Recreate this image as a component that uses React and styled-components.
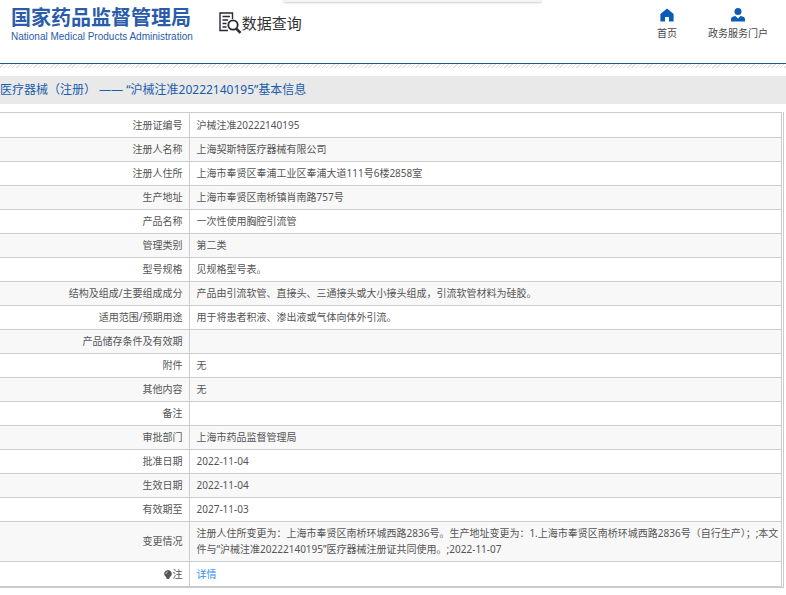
import styled, { createGlobalStyle } from 'styled-components';

const rows = [
    { label: '注册证编号', value: '沪械注准20222140195' },
    { label: '注册人名称', value: '上海契斯特医疗器械有限公司' },
    { label: '注册人住所', value: '上海市奉贤区奉浦工业区奉浦大道111号6楼2858室' },
    { label: '生产地址', value: '上海市奉贤区南桥镇肖南路757号' },
    { label: '产品名称', value: '一次性使用胸腔引流管' },
    { label: '管理类别', value: '第二类' },
    { label: '型号规格', value: '见规格型号表。' },
    { label: '结构及组成/主要组成成分', value: '产品由引流软管、直接头、三通接头或大小接头组成，引流软管材料为硅胶。' },
    { label: '适用范围/预期用途', value: '用于将患者积液、渗出液或气体向体外引流。' },
    { label: '产品储存条件及有效期', value: '' },
    { label: '附件', value: '无' },
    { label: '其他内容', value: '无' },
    { label: '备注', value: '' },
    { label: '审批部门', value: '上海市药品监督管理局' },
    { label: '批准日期', value: '2022-11-04' },
    { label: '生效日期', value: '2022-11-04' },
    { label: '有效期至', value: '2027-11-03' },
    { label: '变更情况', value: '注册人住所变更为：上海市奉贤区南桥环城西路2836号。生产地址变更为：1.上海市奉贤区南桥环城西路2836号（自行生产）；;本文件与“沪械注准20222140195”医疗器械注册证共同使用。;2022-11-07' },
];

function SearchDocIcon(){
    return(
        <svg width="23" height="22" viewBox="0 0 23 22" fill="none" stroke="#2b2733" aria-hidden="true">
            <path d="M13.5 7V1H1v17.5h8" strokeWidth="1.4" />
            <path d="M3.5 4.5h7.5M3.5 8h5.5M3.5 11.5h4M3.5 15h4" strokeWidth="1.3" />
            <circle cx="14" cy="13" r="4.7" strokeWidth="1.8" />
            <path d="M17.5 16.8l4 4" strokeWidth="2.6" />
        </svg>
    );
}

function HomeIcon(){
    return(
        <svg width="14" height="14" viewBox="0 0 14 14" fill="#0a5cb8" aria-hidden="true">
            <path d="M7 0.5L13.6 6v7.5H9V9H5v4.5H0.4V6z" />
        </svg>
    );
}

function PersonIcon(){
    return(
        <svg width="14" height="14" viewBox="0 0 14 14" fill="#0a5cb8" aria-hidden="true">
            <circle cx="7" cy="3.6" r="3.5" />
            <path d="M0 13.6V11q0-2.4 4.4-3L7 10.6 9.6 8Q14 8.6 14 11v2.6z" />
        </svg>
    );
}

function BulbIcon(){
    return(
        <svg width="8" height="9" viewBox="0 0 8 9" aria-hidden="true">
            <path d="M4 0a3.7 3.7 0 0 1 2.2 6.7L5 9H3L1.8 6.7A3.7 3.7 0 0 1 4 0z" fill="#555" />
            <path d="M1.9 4A2.3 2.3 0 0 1 3.8 1.8" fill="none" stroke="#ccc" />
        </svg>
    );
}

export default function App(){
    return(
        <>
            <GlobalStyle />
            <Header>
                <TopPanel />
                <Brand>
                    <h1>国家药品监督管理局</h1>
                    <p>National Medical Products Administration</p>
                </Brand>
                <Query><SearchDocIcon />数据查询</Query>
                <Nav>
                    <NavLink href="#home"><HomeIcon />首页</NavLink>
                    <NavLink href="#portal"><PersonIcon />政务服务门户</NavLink>
                </Nav>
            </Header>
            <Hatch />
            <PageTitle>医疗器械（注册） —— “沪械注准20222140195”基本信息</PageTitle>
            <TableFrame>
                <Table>
                    <tbody>
                        {rows.map((row) => (
                            <Row key={row.label}>
                                <Label scope="row">{row.label}</Label>
                                <Value>{row.value}</Value>
                            </Row>
                        ))}
                        <Row>
                            <Label scope="row"><BulbIcon />注</Label>
                            <Value><DetailLink href="#detail">详情</DetailLink></Value>
                        </Row>
                    </tbody>
                </Table>
            </TableFrame>
        </>
    );
}

const GlobalStyle = createGlobalStyle`
    * {
        box-sizing: border-box;
    }

    body {
        margin: 0;
        background: #fff;
        color: #555;
        font-family: "Noto Sans", "Noto Sans CJK SC", sans-serif;
        font-size: 10px;
        line-height: 16px;
    }

    h1, h2, p {
        margin: 0;
    }
`;

const Header = styled.header`
    position: relative;
    display: flex;
    align-items: flex-start;
    height: 64px;
    padding: 6px 18px 0 11px;
    border-bottom: 1px solid #1a5c8e;
`;

const TopPanel = styled.div`
    position: absolute;
    top: 0;
    left: 36%;
    width: 33%;
    height: 2px;
    background: #f4f4f4;
    border-radius: 0 0 4px 4px;
    box-shadow: 0 1px 2px rgba(0, 0, 0, 0.2);
`;

const Brand = styled.div`
    color: #2a5caa;

    h1 {
        font-size: 20px;
        line-height: 24px;
        font-weight: bold;
    }

    p {
        font-family: "Liberation Sans", sans-serif;
        font-size: 10px;
        line-height: 14px;
    }
`;

const Query = styled.div`
    display: flex;
    align-items: center;
    margin-left: 26px;
    padding-top: 6px;
    color: #333;
    font-size: 15px;
    line-height: 22px;
`;

const Nav = styled.nav`
    display: flex;
    gap: 31px;
    margin-left: auto;
    padding-top: 2px;
`;

const NavLink = styled.a`
    display: flex;
    flex-direction: column;
    align-items: center;
    gap: 3px;
    color: #444;
    text-decoration: none;
`;

const Hatch = styled.div`
    height: 4px;
    background: repeating-linear-gradient(135deg, #fff 0, #fff 2px, #e2e2e2 2px, #e2e2e2 3px);
`;

const PageTitle = styled.h2`
    margin-top: 8px;
    background: #e9e9e9;
    color: #1a5cad;
    font-size: 12px;
    font-weight: normal;
    line-height: 28px;
`;

const TableFrame = styled.main`
    margin: 8px 2px 0 0;
    border: 1px solid #ccc;
    border-width: 0 1px 1px 0;
    padding-right: 1px;
`;

const Table = styled.table`
    width: 100%;
    border-collapse: collapse;
`;

const Row = styled.tr`
    height: 24px;
    background: #fff;

    &:nth-child(even) {
        background: #f8f8f8;
    }

    &:first-child, &:last-child {
        height: 25px;
    }
`;

const Label = styled.th`
    width: 189px;
    padding: 3px 6px 4px;
    border: 1px solid #ccc;
    border-left: none;
    font-weight: normal;
    text-align: right;

    svg {
        margin-right: 1px;
        vertical-align: -1px;
    }
`;

const Value = styled.td`
    padding: 3px 0 4px 7px;
    border: 1px solid #ccc;
`;

const DetailLink = styled.a`
    color: #3390ee;
    text-decoration: none;
`;
